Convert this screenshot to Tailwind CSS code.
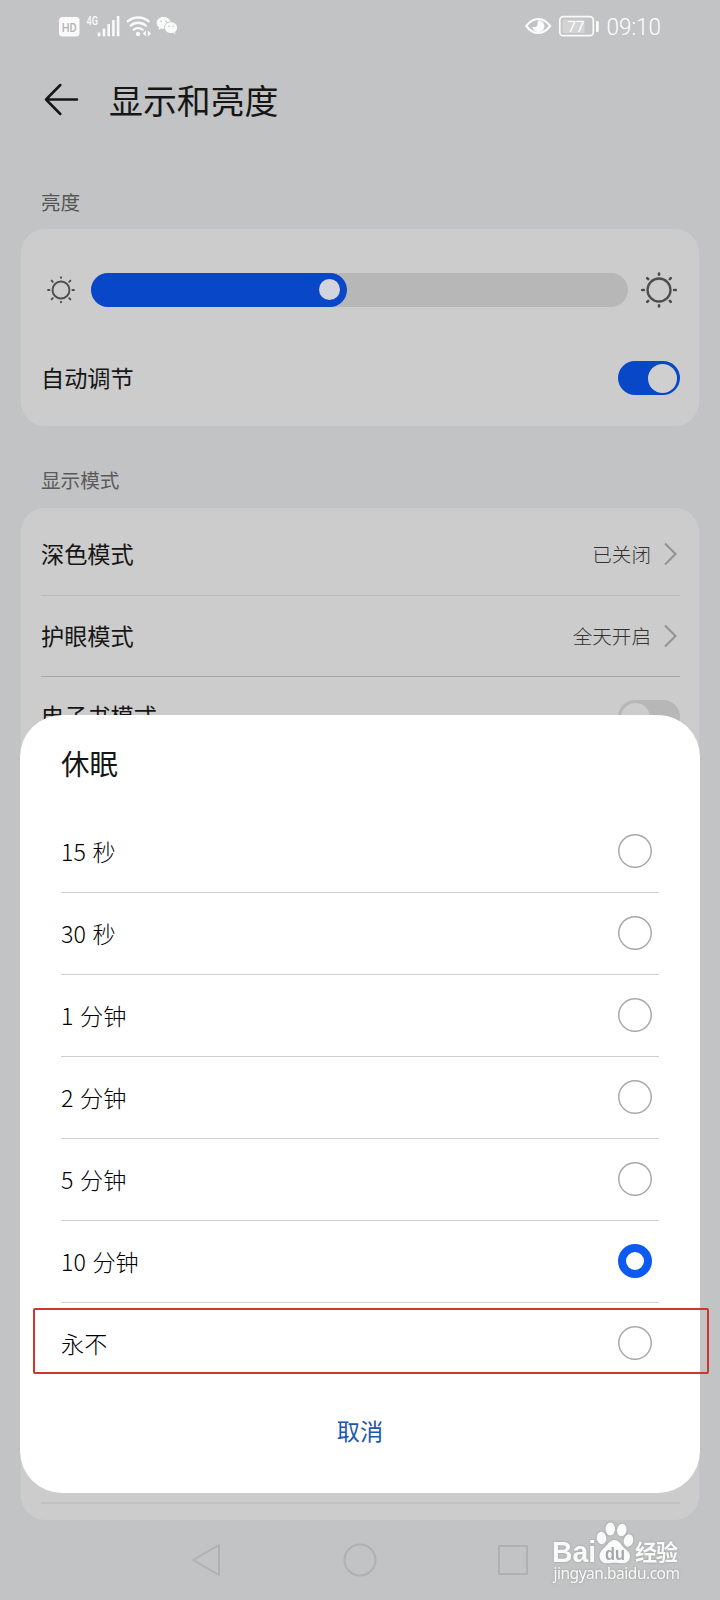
<!DOCTYPE html>
<html lang="zh-CN">
<head>
    <meta charset="UTF-8">
    <meta name="viewport" content="width=device-width, initial-scale=1.0">
    <title>显示和亮度</title>
    <script src="https://cdn.jsdelivr.net/npm/@tailwindcss/browser@4"></script>
</head>
<body class="bg-[#c2c3c4] font-['Noto_Sans_CJK_SC',sans-serif] text-[#161616]">
    <div class="relative w-[720px] h-[1600px] overflow-hidden flex flex-col">

        <!-- Status bar -->
        <div class="h-[54px] shrink-0 flex items-center justify-between pl-[59px] pr-[54px] pb-[2px] text-[#fafafa]">
            <svg class="w-[120px] h-[24px]" viewBox="59 14 120 24" fill="currentColor">
                <rect x="59" y="17" width="20.500" height="19.500" rx="3.500"/>
                <text x="69.300" y="31.500" text-anchor="middle" textLength="15" lengthAdjust="spacingAndGlyphs" font-family="Roboto" font-size="13" font-weight="500" fill="#b4b5b6">HD</text>
                <text x="86.500" y="25" textLength="11.500" lengthAdjust="spacingAndGlyphs" font-family="Roboto" font-size="12" font-weight="500">4G</text>
                <path d="M97.700 32.500h2.600v3.700h-2.600zM102.700 28.500h2.600v7.700h-2.600zM107.400 24h2.600v12.200h-2.600zM112.100 20h2.600v16.200h-2.600zM116.800 16h2.600v20.200h-2.600z"/>
                <g fill="none" stroke="currentColor" stroke-width="2.400" stroke-linecap="round">
                    <path d="M127.800 21.200a16.500 16.500 0 0 1 20.800 0"/>
                    <path d="M130.600 25.600a11.500 11.500 0 0 1 15.200 0"/>
                    <path d="M133.800 29.700a6.600 6.600 0 0 1 8.600 0"/>
                </g>
                <circle cx="138" cy="34" r="2.200"/>
                <path d="M146 30.500v6l-3.300-3zM147.800 30.500v6l3.300-3z"/>
                <path d="M163.500 17c-4 0-6.900 2.700-6.900 6 0 1.900 1 3.500 2.500 4.600l-.6 2.400 2.700-1.400c1 .3 2 .4 3 .3-.6-4.200 2.700-7.400 6.400-7.500-.9-2.700-3.700-4.400-7.100-4.400z"/>
                <path d="M171 22.300c-3.500 0-6.100 2.400-6.100 5.400s2.600 5.400 6.100 5.400c.8 0 1.500-.1 2.200-.3l2.300 1.200-.5-2c1.300-1 2.100-2.500 2.100-4.300 0-3-2.600-5.400-6.100-5.400z"/>
                <g fill="#b9babb">
                    <circle cx="161.200" cy="21.300" r=".8"/><circle cx="166" cy="21.300" r=".8"/>
                    <circle cx="169" cy="26.200" r=".7"/><circle cx="173.200" cy="26.200" r=".7"/>
                </g>
            </svg>
            <svg class="w-[142px] h-[34px]" viewBox="524 9 142 34" fill="none" stroke="currentColor">
                <path d="M526.300 26c3.500-4.800 7.500-7 11.900-7s8.400 2.200 11.900 7c-3.500 4.800-7.500 7-11.900 7s-8.400-2.200-11.900-7z" stroke-width="2.200"/>
                <path d="M538.500 20.200a6 6 0 1 1-6 6.500c2.500.8 4.500 0 5-2 .3-1.500-.2-3 1-4.500z" fill="currentColor" stroke="none"/>
                <rect x="559.800" y="16.700" width="33.500" height="19" rx="3.500" stroke-width="1.700"/>
                <rect x="562.500" y="19.500" width="22" height="13.500" fill="#d4d4d4" stroke="none"/>
                <rect x="596" y="21" width="2.700" height="11" rx="1" fill="currentColor" stroke="none"/>
                <text x="576" y="31.700" text-anchor="middle" font-family="Roboto" font-size="15.500" fill="#fff" stroke="none" textLength="17" lengthAdjust="spacingAndGlyphs">77</text>
                <text x="606.500" y="35.300" font-family="Roboto" font-size="24" font-weight="300" fill="#fff" stroke="none" textLength="54.500" lengthAdjust="spacingAndGlyphs">09:10</text>
            </svg>
        </div>

        <!-- Page header -->
        <div class="h-[92px] shrink-0 flex items-center pl-[44px]">
            <svg class="w-[36px] h-[34px]" viewBox="44 83 36 34" fill="none" stroke="#161616" stroke-width="2.500" stroke-linecap="round" stroke-linejoin="round">
                <path d="M77 99.500H46M60.300 85L46 99.500l14.300 14.500"/>
            </svg>
            <h1 class="ml-[29px] text-[33.900px] leading-[40px]">显示和亮度</h1>
        </div>

        <!-- Brightness -->
        <h2 class="h-[83px] shrink-0 pt-[42px] pl-[41px] text-[19.600px] leading-[28px] text-[#555]">亮度</h2>
        <section class="mx-[21px] h-[197px] shrink-0 rounded-[24px] bg-[#ccc]">
            <div class="h-[121px] flex items-center">
                <svg class="ml-[25px] w-[30px] h-[30px]" viewBox="-15 -15 30 30" fill="none" stroke="#4d4d4d" stroke-width="1.900" stroke-linecap="round">
                    <circle r="8.500"/>
                    <path d="M0-12.300v-.5M0 11.800v.5M-13 0h1.500M11.500 0h1.500M-9.400-9.400l1.200 1.200M9.400-9.400l-1.200 1.200M-9.400 9.400l1.200-1.200M9.400 9.400l-1.200-1.200"/>
                </svg>
                <div class="ml-[15px] w-[537px] h-[34px] rounded-full bg-[#b7b7b7]">
                    <div class="w-[256px] h-full rounded-full bg-[#0747c8] flex items-center justify-end pr-[7px]">
                        <div class="size-[21px] rounded-full bg-[#d4d4de]"></div>
                    </div>
                </div>
                <svg class="ml-[12px] w-[38px] h-[38px]" viewBox="-19 -19 38 38" fill="none" stroke="#4d4d4d" stroke-width="2.600" stroke-linecap="round">
                    <circle r="11.500" stroke-width="2.300"/>
                    <path d="M0-16.500v1.200M0 15.300v1.200M-16.800 0h1.700M15.100 0h1.700M-11.800-11.800l1 1M11.800-11.800l-1 1M-11.800 11.800l1-1M11.800 11.800l-1-1"/>
                </svg>
            </div>
            <div class="h-[56px] flex items-center justify-between pl-[20px] pr-[19px]">
                <span class="pb-[2px] text-[23.200px]">自动调节</span>
                <div class="w-[62px] h-[34px] rounded-full bg-[#0747c8] flex items-center justify-end pr-[3px]">
                    <div class="size-[29px] rounded-full bg-[#cfcfcf]"></div>
                </div>
            </div>
        </section>

        <!-- Display mode -->
        <h2 class="h-[82px] shrink-0 pt-[40px] pl-[41px] text-[19.600px] leading-[28px] text-[#5a5a5a]">显示模式</h2>
        <section class="mx-[21px] h-[1012px] shrink-0 rounded-[24px] bg-[#ccc] pt-[6px] pl-[20px] pr-[19px] flex flex-col">
            <div class="h-[82px] flex items-center border-b border-[#bbb] pb-[2px]">
                <span class="grow text-[23.200px]">深色模式</span>
                <span class="text-[19.600px] font-light text-[#333]">已关闭</span>
                <svg class="ml-[11px] mr-[2px] w-[16px] h-[24px]" viewBox="0 0 16 24" fill="none" stroke="#929292" stroke-width="2"><path d="M3 1.500L13.500 12 3 22.500"/></svg>
            </div>
            <div class="h-[81px] flex items-center border-b border-[#a8a8a8] pb-px">
                <span class="grow pb-px text-[23.200px]">护眼模式</span>
                <span class="text-[19.600px] font-light text-[#333]">全天开启</span>
                <svg class="ml-[11px] mr-[2px] w-[16px] h-[24px]" viewBox="0 0 16 24" fill="none" stroke="#929292" stroke-width="2"><path d="M3 1.500L13.500 12 3 22.500"/></svg>
            </div>
            <div class="h-[80px] flex items-center justify-between">
                <span class="pb-[3px] text-[23.200px]">电子书模式</span>
                <div class="w-[62px] h-[34px] rounded-full bg-[#b7b7b7] flex items-center pl-[3px]">
                    <div class="size-[29px] rounded-full bg-[#cdcdcd]"></div>
                </div>
            </div>
            <div class="mt-auto h-[18px] border-t-2 border-[#c2c2c2]"></div>
        </section>

        <!-- Navigation bar -->
        <nav class="grow flex items-center pl-[188px] text-[#b0b1b3]">
            <svg class="w-[36px] h-[36px]" viewBox="0 0 36 36" fill="none" stroke="currentColor" stroke-width="2"><path d="M31 3v30L5 18z" stroke-linejoin="round"/></svg>
            <svg class="ml-[118px] w-[36px] h-[36px]" viewBox="0 0 36 36" fill="none" stroke="currentColor" stroke-width="2"><circle cx="18" cy="18" r="15.500"/></svg>
            <svg class="ml-[117px] w-[36px] h-[36px]" viewBox="0 0 36 36" fill="none" stroke="currentColor" stroke-width="2"><path d="M4 4h28v28H4z"/></svg>
        </nav>

        <!-- Sleep dialog -->
        <div class="absolute left-[20px] top-[715px] w-[680px] h-[778px] rounded-[42px] bg-white px-[41px] flex flex-col">
            <h3 class="h-[96px] shrink-0 pt-[28px] text-[28.500px] leading-[40px]">休眠</h3>
            <ul class="text-[23.200px] font-light text-black [word-spacing:1.500px]">
                <li class="h-[82px] flex items-center justify-between border-b border-[#cfcfcf] pr-[7px] pb-px">15 秒<span class="size-[34px] rounded-full shadow-[inset_0_0_0_1.5px_#a8a8a8]"></span></li>
                <li class="h-[82px] flex items-center justify-between border-b border-[#cfcfcf] pr-[7px] pb-px">30 秒<span class="size-[34px] rounded-full shadow-[inset_0_0_0_1.5px_#a8a8a8]"></span></li>
                <li class="h-[82px] flex items-center justify-between border-b border-[#cfcfcf] pr-[7px] pb-px">1 分钟<span class="size-[34px] rounded-full shadow-[inset_0_0_0_1.5px_#a8a8a8]"></span></li>
                <li class="h-[82px] flex items-center justify-between border-b border-[#cfcfcf] pr-[7px] pb-px">2 分钟<span class="size-[34px] rounded-full shadow-[inset_0_0_0_1.5px_#a8a8a8]"></span></li>
                <li class="h-[82px] flex items-center justify-between border-b border-[#cfcfcf] pr-[7px] pb-px">5 分钟<span class="size-[34px] rounded-full shadow-[inset_0_0_0_1.5px_#a8a8a8]"></span></li>
                <li class="h-[82px] flex items-center justify-between border-b border-[#cfcfcf] pr-[7px] pb-px">10 分钟<span class="size-[34px] rounded-full border-[8px] border-[#0c5af0]"></span></li>
                <li class="h-[82px] flex items-center justify-between pr-[7px] pb-[2px]">永不<span class="size-[34px] rounded-full shadow-[inset_0_0_0_1.5px_#a8a8a8]"></span></li>
            </ul>
            <button class="h-[94px] pb-[3px] text-[23.200px] text-[#1d57a9]">取消</button>
        </div>

        <!-- Highlight around the last option -->
        <div class="absolute left-[33px] top-[1308px] w-[676px] h-[66px] rounded-[2px] border-2 border-[#cf3630]"></div>

        <!-- Watermark -->
        <svg class="absolute left-[545px] top-[1515px] w-[145px] h-[75px] drop-shadow-[0_0_1px_#999]" viewBox="545 1515 145 75" fill="#fafafa">
            <text x="552" y="1562" font-family="Liberation Sans" font-size="29" font-weight="700" textLength="44" lengthAdjust="spacingAndGlyphs">Bai</text>
            <ellipse cx="601.500" cy="1538" rx="4.800" ry="6.200" transform="rotate(-10 601.500 1538)"/>
            <ellipse cx="610.300" cy="1529" rx="4.800" ry="6.400"/>
            <ellipse cx="621.800" cy="1530" rx="4.800" ry="6.400" transform="rotate(10 621.800 1530)"/>
            <ellipse cx="628.500" cy="1540.500" rx="4.800" ry="6.200" transform="rotate(15 628.500 1540.500)"/>
            <path d="M614.500 1540c3.500 0 5.500 2.700 7.500 5.500 2.500 3.500 8 5.500 8 10.500 0 4.500-3 7.300-7 7.300-3 0-5.500-.6-8.500-.6s-5 .6-8 .6c-4 0-7-3-7-7.300 0-5 4.500-7.500 7-10.500 2.200-2.800 4.500-5.500 8-5.500z"/>
            <text x="615" y="1560" text-anchor="middle" font-family="Liberation Sans" font-size="19" font-weight="700" textLength="20" lengthAdjust="spacingAndGlyphs" fill="#a6a7a9">du</text>
            <text x="635" y="1560" font-family="Noto Sans CJK SC" font-size="22" font-weight="700" textLength="43">经验</text>
            <text x="553.500" y="1579" font-family="Noto Sans" font-size="15.500" textLength="126.500">jingyan.baidu.com</text>
        </svg>
    </div>
</body>
</html>
